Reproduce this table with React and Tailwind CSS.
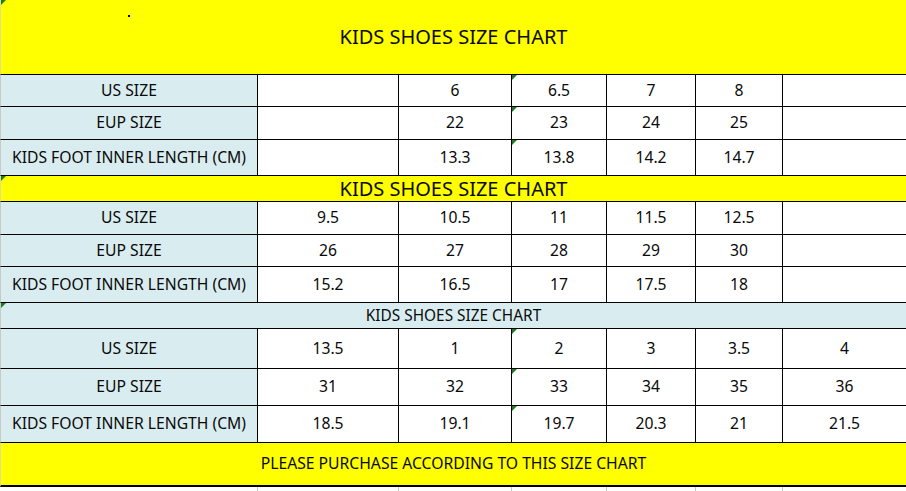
const widths = ["w-[258px]", "w-[141px]", "w-[113px]", "w-[95px]", "w-[89px]", "w-[87px]", "w-[123px]"];

const Tick = () => (
  <span className="absolute left-0 top-0 w-0 h-0 border-t-[5px] border-r-[5px] border-t-[#1e7b1e] border-r-transparent" />
);

const DataRow = ({ label, values, height, ticks = [] }) => (
  <div className={`flex ${height}`}>
    {[label, ...values].map((v, i) => (
      <div
        key={i}
        className={`relative flex items-center justify-center border-b border-black ${widths[i]} ${
          i === 0 ? "bg-[#d9edf0] border-l border-l-[#c9c9c9] border-r" : i < 6 ? "bg-white border-r" : "bg-white"
        }`}
      >
        {ticks.includes(i) && <Tick />}
        {v}
      </div>
    ))}
  </div>
);

const Block = ({ rows, hs, tick }) => (
  <>
    <DataRow label="US SIZE" values={rows[0]} height={hs[0]} ticks={tick ? [3] : []} />
    <DataRow label="EUP SIZE" values={rows[1]} height={hs[1]} ticks={tick ? [3] : []} />
    <DataRow label="KIDS FOOT INNER LENGTH (CM)" values={rows[2]} height={hs[2]} ticks={tick ? [3] : []} />
  </>
);

export default function App() {
  return (
    <div className="w-[906px] h-[491px] overflow-hidden bg-white text-[15.7px] text-[#0a0a0a] font-['Noto_Sans',sans-serif]">
      <div className="relative h-[75px] flex items-center justify-center bg-[#ffff00] border-b border-black border-l border-l-[#dede9a] text-[20px]">
        <Tick />
        <span className="absolute left-[127px] top-[15px] w-[2px] h-[2px] bg-black" />
        KIDS SHOES SIZE CHART
      </div>

      <Block
        rows={[
          ["", "6", "6.5", "7", "8", ""],
          ["", "22", "23", "24", "25", ""],
          ["", "13.3", "13.8", "14.2", "14.7", ""],
        ]}
        hs={["h-[32px]", "h-[33px]", "h-[36px]"]}
        tick
      />

      <div className="relative h-[26px] flex items-center justify-center bg-[#ffff00] border-b border-black border-l border-l-[#dede9a] text-[20px]">
        <Tick />
        KIDS SHOES SIZE CHART
      </div>

      <Block
        rows={[
          ["9.5", "10.5", "11", "11.5", "12.5", ""],
          ["26", "27", "28", "29", "30", ""],
          ["15.2", "16.5", "17", "17.5", "18", ""],
        ]}
        hs={["h-[33px]", "h-[32px]", "h-[36px]"]}
      />

      <div className="relative h-[26px] flex items-center justify-center bg-[#d9edf0] border-b border-black border-l border-l-[#c9c9c9] text-[15.4px]">
        <Tick />
        KIDS SHOES SIZE CHART
      </div>

      <Block
        rows={[
          ["13.5", "1", "2", "3", "3.5", "4"],
          ["31", "32", "33", "34", "35", "36"],
          ["18.5", "19.1", "19.7", "20.3", "21", "21.5"],
        ]}
        hs={["h-[40px]", "h-[37px]", "h-[37px]"]}
        tick
      />

      <div className="h-[44px] flex items-center justify-center bg-[#ffff00] border-b-2 border-black border-l border-l-[#dede9a]">
        PLEASE PURCHASE ACCORDING TO THIS SIZE CHART
      </div>

      <div className="flex h-[4px]">
        {widths.map((w, i) => (
          <div key={i} className={`${w} ${i < 6 ? "border-r border-[#c6c6c6]" : ""}`} />
        ))}
      </div>
    </div>
  );
}
